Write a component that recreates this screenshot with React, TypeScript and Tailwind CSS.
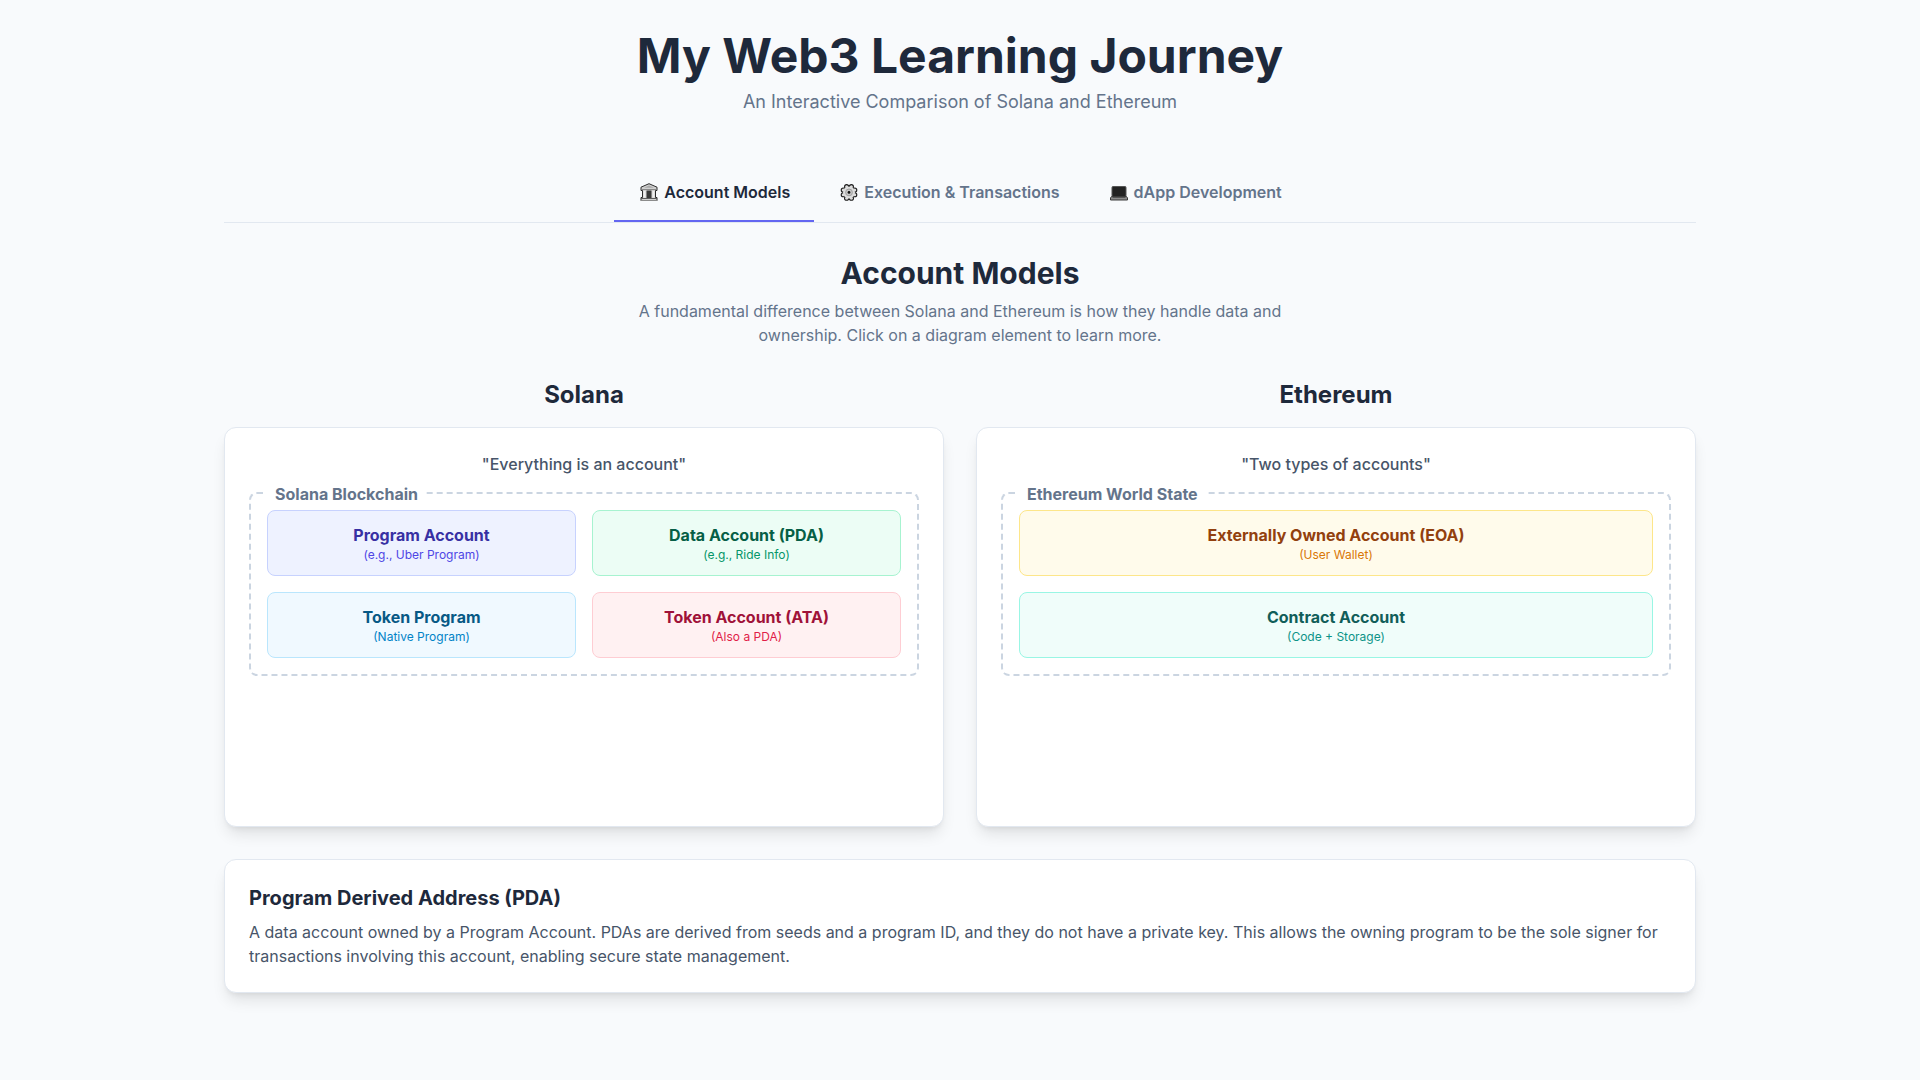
import { useState, type ReactNode } from "react";

function BankIcon() {
  return (
    <svg aria-hidden="true" className="h-5 w-[22px]" viewBox="0 0 22 20">
      <path d="M11 1.700 3 5.200v3.300h1.500V15.500H3v3h16v-3h-1.500V8.500H19V5.200z" fill="#d0d0d0" stroke="#2a2a2a" strokeWidth="1" strokeLinejoin="round" />
      <path d="M6 5.800 11 3.600l5 2.200z" fill="#a8a8a8" />
      <path d="M4 7.500h14" stroke="#8a8a8a" strokeWidth="1" />
      <path d="M6.500 9v6.500M15.500 9v6.500" stroke="#f0f0f0" strokeWidth="2" />
      <path d="M8.500 8.500h5V16h-5z" fill="#3a3a3a" />
      <path d="M3 16.500h16" stroke="#5c5c5c" strokeWidth="1" />
      <path d="M2.500 18.500h17" stroke="#8c8c8c" strokeWidth="1" />
    </svg>
  );
}

function GearIcon() {
  const lobes = [0, 1, 2, 3, 4, 5, 6, 7].map((i) => {
    const a = (Math.PI / 4) * i + Math.PI / 8;
    return { x: 11 + 6.2 * Math.cos(a), y: 10.4 + 6.2 * Math.sin(a) };
  });
  return (
    <svg aria-hidden="true" className="h-5 w-[22px]" viewBox="0 0 22 20">
      {lobes.map((p, i) => (
        <circle key={i} cx={p.x} cy={p.y} r="2.600" fill="#1c1c1c" />
      ))}
      {lobes.map((p, i) => (
        <circle key={i} cx={p.x} cy={p.y} r="1.500" fill="#dcdcdc" />
      ))}
      <circle cx="11" cy="10.400" r="6" fill="#dcdcdc" />
      <circle cx="11" cy="10.400" r="3.400" fill="#c8c8c8" stroke="#a0a0a0" strokeWidth="1" />
      <circle cx="11" cy="10.400" r="1.400" fill="#111" />
    </svg>
  );
}

function LaptopIcon() {
  return (
    <svg aria-hidden="true" className="h-5 w-[22px]" viewBox="0 0 22 20">
      <rect x="4" y="4.500" width="14" height="10" rx="1" fill="#222" stroke="#555" strokeWidth="1" />
      <path d="M3.500 14.500h15l1 1.500v2h-17v-2z" fill="#8c8c8c" stroke="#3a3a3a" strokeWidth="1" strokeLinejoin="round" />
      <path d="M4.500 15.500h13" stroke="#555" strokeWidth="1" />
    </svg>
  );
}

const tabs: { label: string; icon: ReactNode }[] = [
  { label: "Account Models", icon: <BankIcon /> },
  { label: "Execution & Transactions", icon: <GearIcon /> },
  { label: "dApp Development", icon: <LaptopIcon /> },
];

type Account = { name: string; note: string; box: string; noteColor: string };

const solana: Account[] = [
  { name: "Program Account", note: "(e.g., Uber Program)", box: "bg-[#eef2ff] border-[#c7d2fe] text-[#3730a3]", noteColor: "text-[#4f46e5]" },
  { name: "Data Account (PDA)", note: "(e.g., Ride Info)", box: "bg-[#ecfdf5] border-[#a7f3d0] text-[#065f46]", noteColor: "text-[#059669]" },
  { name: "Token Program", note: "(Native Program)", box: "bg-[#f0f9ff] border-[#bae6fd] text-[#075985]", noteColor: "text-[#0284c7]" },
  { name: "Token Account (ATA)", note: "(Also a PDA)", box: "bg-[#fff1f2] border-[#fecdd3] text-[#9f1239]", noteColor: "text-[#e11d48]" },
];

const ethereum: Account[] = [
  { name: "Externally Owned Account (EOA)", note: "(User Wallet)", box: "bg-[#fffbeb] border-[#fde68a] text-[#92400e]", noteColor: "text-[#d97706]" },
  { name: "Contract Account", note: "(Code + Storage)", box: "bg-[#f0fdfa] border-[#99f6e4] text-[#115e59]", noteColor: "text-[#0d9488]" },
];

const card = "rounded-xl border border-[#e2e8f0] bg-white p-6 shadow-lg";

function ChainPanel(props: { title: string; quote: string; legend: string; accounts: Account[]; grid: string }) {
  return (
    <section>
      <h3 className="mb-4 text-center text-2xl font-bold">{props.title}</h3>
      <div className={`${card} min-h-[400px]`}>
        <p className="text-center font-medium text-[#475569]">{props.quote}</p>
        <div className="relative mt-4 rounded-lg border-2 border-dashed border-[#cbd5e1] p-4">
          <span className="absolute -top-3 left-4 bg-white px-2 font-bold text-[#64748b]">{props.legend}</span>
          <div className={`relative grid gap-4 ${props.grid}`}>
            {props.accounts.map((a) => (
              <button key={a.name} type="button" className={`cursor-pointer rounded-lg border p-3 text-center ${a.box}`}>
                <span className="block font-bold">{a.name}</span>
                <span className={`block text-xs ${a.noteColor}`}>{a.note}</span>
              </button>
            ))}
          </div>
        </div>
      </div>
    </section>
  );
}

export default function App() {
  const [active, setActive] = useState(0);
  return (
    <div className="min-h-screen bg-[#f8fafc] font-['Inter',sans-serif] text-[#1e293b]">
      <div className="container mx-auto p-8">
        <header className="mb-12 text-center">
          <h1 className="text-5xl font-bold">My Web3 Learning Journey</h1>
          <p className="mt-2 text-lg text-[#64748b]">An Interactive Comparison of Solana and Ethereum</p>
        </header>
        <nav className="mb-8 flex justify-center border-b border-[#e2e8f0]">
          {tabs.map((t, i) => (
            <button
              key={t.label}
              type="button"
              onClick={() => setActive(i)}
              className={`flex cursor-pointer items-center gap-1 border-b-2 px-6 py-4 font-semibold ${
                i === active ? "border-[#6366f1] text-[#1e293b]" : "border-transparent text-[#64748b]"
              }`}
            >
              {t.icon}
              {t.label}
            </button>
          ))}
        </nav>
        <main>
          <div className="mb-8 text-center">
            <h2 className="text-3xl font-bold">Account Models</h2>
            <p className="mx-auto mt-2 max-w-2xl text-[#64748b]">
              A fundamental difference between Solana and Ethereum is how they handle data and ownership. Click on a diagram element to learn more.
            </p>
          </div>
          <div className="grid gap-8 lg:grid-cols-2">
            <ChainPanel title="Solana" quote={'"Everything is an account"'} legend="Solana Blockchain" accounts={solana} grid="grid-cols-2" />
            <ChainPanel title="Ethereum" quote={'"Two types of accounts"'} legend="Ethereum World State" accounts={ethereum} grid="grid-cols-1" />
          </div>
          <section className={`${card} mt-8`}>
            <h3 className="mb-2 text-xl font-bold">Program Derived Address (PDA)</h3>
            <p className="text-[#475569]">
              A data account owned by a Program Account. PDAs are derived from seeds and a program ID, and they do not have a private key. This allows the owning program to be the sole signer for transactions involving this account, enabling secure state management.
            </p>
          </section>
        </main>
      </div>
    </div>
  );
}
